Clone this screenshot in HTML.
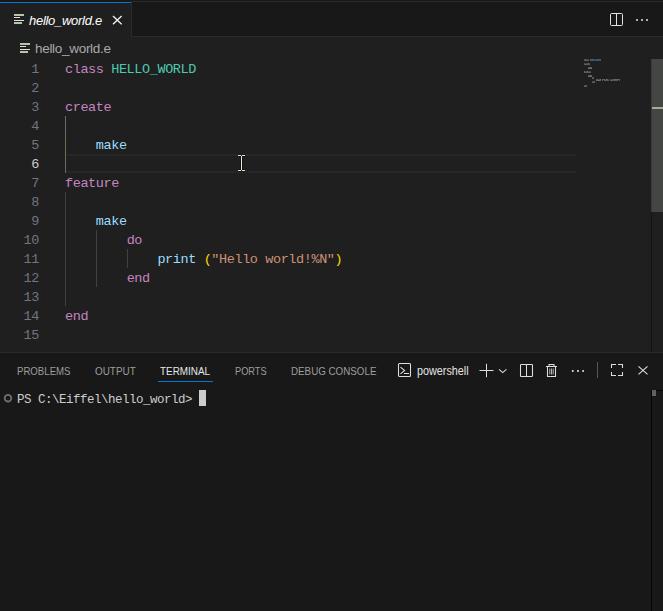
<!DOCTYPE html>
<html><head><meta charset="utf-8">
<style>
*{margin:0;padding:0;box-sizing:border-box}
html,body{width:663px;height:611px;overflow:hidden;background:#181818}
body{position:relative;font-family:"Liberation Sans",sans-serif}
.a{position:absolute}
.mono{font-family:"Liberation Mono",monospace}
/* tab bar */
#tabbar{left:0;top:0;width:663px;height:37px;background:#181818}
#tabtop{left:131px;top:1px;width:532px;height:1px;background:#2b2b2b}
#tabbot{left:131px;top:36px;width:532px;height:1px;background:#2b2b2b}
#tab{left:0;top:2px;width:131px;height:35px;background:#1f1f1f}
#tabblue{left:0;top:2px;width:131px;height:1px;background:#0078d4}
#tabright{left:131px;top:1px;width:1px;height:36px;background:#2b2b2b}
.tablabel{letter-spacing:-0.28px;left:29px;top:11.5px;font-size:13px;font-style:italic;color:#ffffff;white-space:pre;line-height:18px}
/* breadcrumbs */
#bc{left:0;top:37px;width:663px;height:22px;background:#1f1f1f}
.bclabel{letter-spacing:-0.3px;left:35px;top:39.5px;font-size:13.5px;color:#a9a9a9;white-space:pre;line-height:18px}
/* editor */
#editor{left:0;top:59px;width:663px;height:293px;background:#1f1f1f}
.ln{margin-top:1px;left:0;width:39px;text-align:right;color:#6e7681;font-size:13.5px;line-height:19px;height:19px;white-space:pre;letter-spacing:-0.4px}
.code{margin-top:1px;left:65px;font-size:13.5px;line-height:19px;height:19px;white-space:pre;letter-spacing:-0.4px;color:#cccccc}
.kw{color:#c586c0}.ty{color:#4ec9b0}.id{color:#9cdcfe}.br{color:#ffd700}.st{color:#ce9178}
.guide{width:1px;background:#404040}
/* panel */
#pborder{left:0;top:352px;width:663px;height:1px;background:#2b2b2b}
#panel{left:0;top:353px;width:663px;height:258px;background:#181818}
.pt{transform-origin:0 0;top:364px;font-size:11px;line-height:14px;color:#9d9d9d;white-space:pre}
.pw{font-size:12px;line-height:16px;color:#e4e4e4;white-space:pre}
.term{letter-spacing:-0.5px;font-size:12.5px;line-height:16px;color:#cccccc;white-space:pre}
</style></head>
<body>
<div id="tabbar" class="a"></div>
<div id="tabtop" class="a"></div>
<div id="tabbot" class="a"></div>
<div id="tab" class="a"></div>
<div id="tabblue" class="a"></div>
<div id="tabright" class="a"></div>
<!-- tab icon -->
<svg class="a" style="left:14px;top:14px" width="10" height="10" viewBox="0 0 10 10">
<rect x="0" y="0" width="10" height="2" fill="#b3c6ab"/>
<rect x="0" y="3" width="6" height="1" fill="#e0e0e0"/>
<rect x="0" y="6" width="10" height="1" fill="#e0e0e0"/>
<rect x="0" y="8" width="8" height="2" fill="#b3c6ab"/>
</svg>
<div class="a tablabel">hello_world.e</div>
<svg class="a" style="left:112px;top:15px" width="10" height="10" viewBox="0 0 10 10">
<path d="M1 0.9L9.6 9.3M9.6 0.9L1 9.3" stroke="#f2f2f2" stroke-width="1.35"/>
</svg>
<!-- split editor -->
<svg class="a" style="left:610px;top:13px" width="14" height="14" viewBox="0 0 14 14">
<rect x="0.5" y="0.5" width="12" height="12" rx="1" fill="none" stroke="#e2e2e2" stroke-width="1"/>
<line x1="6.5" y1="0.5" x2="6.5" y2="12.5" stroke="#e2e2e2" stroke-width="1"/>
</svg>
<svg class="a" style="left:635px;top:18px" width="15" height="4" viewBox="0 0 15 4">
<circle cx="2" cy="2" r="1" fill="#e2e2e2"/><circle cx="7" cy="2" r="1" fill="#e2e2e2"/><circle cx="12" cy="2" r="1" fill="#e2e2e2"/>
</svg>

<div id="bc" class="a"></div>
<svg class="a" style="left:20px;top:43px" width="10" height="10" viewBox="0 0 10 10">
<rect x="0" y="0" width="10" height="2" fill="#b4c6ac"/>
<rect x="0" y="3" width="6" height="1" fill="#e0e0e0"/>
<rect x="0" y="6" width="10" height="1" fill="#e0e0e0"/>
<rect x="0" y="8" width="8" height="2" fill="#b4c6ac"/>
</svg>
<div class="a bclabel">hello_world.e</div>

<div id="editor" class="a"></div>
<!-- current line -->
<div class="a" style="left:65px;top:154px;width:511px;height:19px;border-top:2px solid #262626;border-bottom:2px solid #262626"></div>
<!-- guides -->
<div class="a guide" style="left:65px;top:116px;height:57px;background:#676b6d"></div>
<div class="a guide" style="left:65px;top:135px;height:19px;background:#726d50"></div>
<div class="a guide" style="left:65px;top:192px;height:114px"></div>
<div class="a guide" style="left:96px;top:230px;height:57px"></div>
<div class="a guide" style="left:127px;top:249px;height:19px"></div>

<div class="a ln mono" style="top:59px">1</div>
<div class="a ln mono" style="top:78px">2</div>
<div class="a ln mono" style="top:97px">3</div>
<div class="a ln mono" style="top:116px">4</div>
<div class="a ln mono" style="top:135px">5</div>
<div class="a ln mono" style="top:154px;color:#cccccc">6</div>
<div class="a ln mono" style="top:173px">7</div>
<div class="a ln mono" style="top:192px">8</div>
<div class="a ln mono" style="top:211px">9</div>
<div class="a ln mono" style="top:230px">10</div>
<div class="a ln mono" style="top:249px">11</div>
<div class="a ln mono" style="top:268px">12</div>
<div class="a ln mono" style="top:287px">13</div>
<div class="a ln mono" style="top:306px">14</div>
<div class="a ln mono" style="top:325px">15</div>

<div class="a code mono" style="top:59px"><span class="kw">class</span> <span class="ty">HELLO_WORLD</span></div>
<div class="a code mono" style="top:97px"><span class="kw">create</span></div>
<div class="a code mono" style="top:135px">    <span class="id">make</span></div>
<div class="a code mono" style="top:173px"><span class="kw">feature</span></div>
<div class="a code mono" style="top:211px">    <span class="id">make</span></div>
<div class="a code mono" style="top:230px">        <span class="kw">do</span></div>
<div class="a code mono" style="top:249px">            <span class="id">print</span> <span class="br">(</span><span class="st">"Hello world!%N"</span><span class="br">)</span></div>
<div class="a code mono" style="top:268px">        <span class="kw">end</span></div>
<div class="a code mono" style="top:306px"><span class="kw">end</span></div>

<!-- I-beam -->
<svg class="a" style="left:236px;top:153px" width="11" height="20" viewBox="0 0 11 20">
<path d="M2 2.5H5M6 2.5H9M5.5 3V17M2 17.5H5M6 17.5H9" stroke="#000" stroke-width="2.4" opacity="0.55"/>
<path d="M2 2.5H5M6 2.5H9M5.5 3V17M2 17.5H5M6 17.5H9" stroke="#ece6d6" stroke-width="1"/>
</svg>

<!-- minimap -->
<svg class="a" style="left:0;top:0" width="663" height="100" viewBox="0 0 663 100" shape-rendering="crispEdges"><rect x="584" y="59" width="1" height="1" fill="#a0a0a0" fill-opacity="0.3"/><rect x="584" y="60" width="1" height="1" fill="#a0a0a0" fill-opacity="0.5"/><rect x="585" y="59" width="1" height="1" fill="#a0a0a0" fill-opacity="0.55"/><rect x="585" y="60" width="1" height="1" fill="#a0a0a0" fill-opacity="0.45"/><rect x="586" y="59" width="1" height="1" fill="#a0a0a0" fill-opacity="0.3"/><rect x="586" y="60" width="1" height="1" fill="#a0a0a0" fill-opacity="0.5"/><rect x="587" y="59" width="1" height="1" fill="#a0a0a0" fill-opacity="0.3"/><rect x="587" y="60" width="1" height="1" fill="#a0a0a0" fill-opacity="0.5"/><rect x="588" y="59" width="1" height="1" fill="#a0a0a0" fill-opacity="0.3"/><rect x="588" y="60" width="1" height="1" fill="#a0a0a0" fill-opacity="0.5"/><rect x="590" y="59" width="1" height="1" fill="#5a90c8" fill-opacity="0.55"/><rect x="590" y="60" width="1" height="1" fill="#5a90c8" fill-opacity="0.45"/><rect x="591" y="59" width="1" height="1" fill="#5a90c8" fill-opacity="0.55"/><rect x="591" y="60" width="1" height="1" fill="#5a90c8" fill-opacity="0.45"/><rect x="592" y="59" width="1" height="1" fill="#5a90c8" fill-opacity="0.55"/><rect x="592" y="60" width="1" height="1" fill="#5a90c8" fill-opacity="0.45"/><rect x="593" y="59" width="1" height="1" fill="#5a90c8" fill-opacity="0.55"/><rect x="593" y="60" width="1" height="1" fill="#5a90c8" fill-opacity="0.45"/><rect x="594" y="59" width="1" height="1" fill="#5a90c8" fill-opacity="0.55"/><rect x="594" y="60" width="1" height="1" fill="#5a90c8" fill-opacity="0.45"/><rect x="595" y="59" width="1" height="1" fill="#5a90c8" fill-opacity="0.1"/><rect x="595" y="60" width="1" height="1" fill="#5a90c8" fill-opacity="0.45"/><rect x="596" y="59" width="1" height="1" fill="#5a90c8" fill-opacity="0.55"/><rect x="596" y="60" width="1" height="1" fill="#5a90c8" fill-opacity="0.45"/><rect x="597" y="59" width="1" height="1" fill="#5a90c8" fill-opacity="0.55"/><rect x="597" y="60" width="1" height="1" fill="#5a90c8" fill-opacity="0.45"/><rect x="598" y="59" width="1" height="1" fill="#5a90c8" fill-opacity="0.55"/><rect x="598" y="60" width="1" height="1" fill="#5a90c8" fill-opacity="0.45"/><rect x="599" y="59" width="1" height="1" fill="#5a90c8" fill-opacity="0.55"/><rect x="599" y="60" width="1" height="1" fill="#5a90c8" fill-opacity="0.45"/><rect x="600" y="59" width="1" height="1" fill="#5a90c8" fill-opacity="0.55"/><rect x="600" y="60" width="1" height="1" fill="#5a90c8" fill-opacity="0.45"/><rect x="584" y="63" width="1" height="1" fill="#a0a0a0" fill-opacity="0.3"/><rect x="584" y="64" width="1" height="1" fill="#a0a0a0" fill-opacity="0.5"/><rect x="585" y="63" width="1" height="1" fill="#a0a0a0" fill-opacity="0.3"/><rect x="585" y="64" width="1" height="1" fill="#a0a0a0" fill-opacity="0.5"/><rect x="586" y="63" width="1" height="1" fill="#a0a0a0" fill-opacity="0.3"/><rect x="586" y="64" width="1" height="1" fill="#a0a0a0" fill-opacity="0.5"/><rect x="587" y="63" width="1" height="1" fill="#a0a0a0" fill-opacity="0.3"/><rect x="587" y="64" width="1" height="1" fill="#a0a0a0" fill-opacity="0.5"/><rect x="588" y="63" width="1" height="1" fill="#a0a0a0" fill-opacity="0.55"/><rect x="588" y="64" width="1" height="1" fill="#a0a0a0" fill-opacity="0.45"/><rect x="589" y="63" width="1" height="1" fill="#a0a0a0" fill-opacity="0.3"/><rect x="589" y="64" width="1" height="1" fill="#a0a0a0" fill-opacity="0.5"/><rect x="588" y="67" width="1" height="1" fill="#b0c4d4" fill-opacity="0.3"/><rect x="588" y="68" width="1" height="1" fill="#b0c4d4" fill-opacity="0.5"/><rect x="589" y="67" width="1" height="1" fill="#b0c4d4" fill-opacity="0.3"/><rect x="589" y="68" width="1" height="1" fill="#b0c4d4" fill-opacity="0.5"/><rect x="590" y="67" width="1" height="1" fill="#b0c4d4" fill-opacity="0.55"/><rect x="590" y="68" width="1" height="1" fill="#b0c4d4" fill-opacity="0.45"/><rect x="591" y="67" width="1" height="1" fill="#b0c4d4" fill-opacity="0.3"/><rect x="591" y="68" width="1" height="1" fill="#b0c4d4" fill-opacity="0.5"/><rect x="584" y="71" width="1" height="1" fill="#a0a0a0" fill-opacity="0.55"/><rect x="584" y="72" width="1" height="1" fill="#a0a0a0" fill-opacity="0.45"/><rect x="585" y="71" width="1" height="1" fill="#a0a0a0" fill-opacity="0.3"/><rect x="585" y="72" width="1" height="1" fill="#a0a0a0" fill-opacity="0.5"/><rect x="586" y="71" width="1" height="1" fill="#a0a0a0" fill-opacity="0.3"/><rect x="586" y="72" width="1" height="1" fill="#a0a0a0" fill-opacity="0.5"/><rect x="587" y="71" width="1" height="1" fill="#a0a0a0" fill-opacity="0.55"/><rect x="587" y="72" width="1" height="1" fill="#a0a0a0" fill-opacity="0.45"/><rect x="588" y="71" width="1" height="1" fill="#a0a0a0" fill-opacity="0.3"/><rect x="588" y="72" width="1" height="1" fill="#a0a0a0" fill-opacity="0.5"/><rect x="589" y="71" width="1" height="1" fill="#a0a0a0" fill-opacity="0.3"/><rect x="589" y="72" width="1" height="1" fill="#a0a0a0" fill-opacity="0.5"/><rect x="590" y="71" width="1" height="1" fill="#a0a0a0" fill-opacity="0.3"/><rect x="590" y="72" width="1" height="1" fill="#a0a0a0" fill-opacity="0.5"/><rect x="588" y="75" width="1" height="1" fill="#b0c4d4" fill-opacity="0.3"/><rect x="588" y="76" width="1" height="1" fill="#b0c4d4" fill-opacity="0.5"/><rect x="589" y="75" width="1" height="1" fill="#b0c4d4" fill-opacity="0.3"/><rect x="589" y="76" width="1" height="1" fill="#b0c4d4" fill-opacity="0.5"/><rect x="590" y="75" width="1" height="1" fill="#b0c4d4" fill-opacity="0.55"/><rect x="590" y="76" width="1" height="1" fill="#b0c4d4" fill-opacity="0.45"/><rect x="591" y="75" width="1" height="1" fill="#b0c4d4" fill-opacity="0.3"/><rect x="591" y="76" width="1" height="1" fill="#b0c4d4" fill-opacity="0.5"/><rect x="592" y="77" width="1" height="1" fill="#a0a0a0" fill-opacity="0.55"/><rect x="592" y="78" width="1" height="1" fill="#a0a0a0" fill-opacity="0.45"/><rect x="593" y="77" width="1" height="1" fill="#a0a0a0" fill-opacity="0.3"/><rect x="593" y="78" width="1" height="1" fill="#a0a0a0" fill-opacity="0.5"/><rect x="596" y="79" width="1" height="1" fill="#b0c4d4" fill-opacity="0.4"/><rect x="596" y="80" width="1" height="1" fill="#b0c4d4" fill-opacity="0.45"/><rect x="597" y="79" width="1" height="1" fill="#b0c4d4" fill-opacity="0.3"/><rect x="597" y="80" width="1" height="1" fill="#b0c4d4" fill-opacity="0.5"/><rect x="598" y="79" width="1" height="1" fill="#b0c4d4" fill-opacity="0.3"/><rect x="598" y="80" width="1" height="1" fill="#b0c4d4" fill-opacity="0.5"/><rect x="599" y="79" width="1" height="1" fill="#b0c4d4" fill-opacity="0.3"/><rect x="599" y="80" width="1" height="1" fill="#b0c4d4" fill-opacity="0.5"/><rect x="600" y="79" width="1" height="1" fill="#b0c4d4" fill-opacity="0.55"/><rect x="600" y="80" width="1" height="1" fill="#b0c4d4" fill-opacity="0.45"/><rect x="602" y="79" width="1" height="1" fill="#b8a448" fill-opacity="0.55"/><rect x="602" y="80" width="1" height="1" fill="#b8a448" fill-opacity="0.45"/><rect x="603" y="79" width="1" height="1" fill="#a89e88" fill-opacity="0.45"/><rect x="603" y="80" width="1" height="1" fill="#a89e88" fill-opacity="0.05"/><rect x="604" y="79" width="1" height="1" fill="#a89e88" fill-opacity="0.55"/><rect x="604" y="80" width="1" height="1" fill="#a89e88" fill-opacity="0.45"/><rect x="605" y="79" width="1" height="1" fill="#a89e88" fill-opacity="0.3"/><rect x="605" y="80" width="1" height="1" fill="#a89e88" fill-opacity="0.5"/><rect x="606" y="79" width="1" height="1" fill="#a89e88" fill-opacity="0.55"/><rect x="606" y="80" width="1" height="1" fill="#a89e88" fill-opacity="0.45"/><rect x="607" y="79" width="1" height="1" fill="#a89e88" fill-opacity="0.55"/><rect x="607" y="80" width="1" height="1" fill="#a89e88" fill-opacity="0.45"/><rect x="608" y="79" width="1" height="1" fill="#a89e88" fill-opacity="0.3"/><rect x="608" y="80" width="1" height="1" fill="#a89e88" fill-opacity="0.5"/><rect x="610" y="79" width="1" height="1" fill="#a89e88" fill-opacity="0.3"/><rect x="610" y="80" width="1" height="1" fill="#a89e88" fill-opacity="0.5"/><rect x="611" y="79" width="1" height="1" fill="#a89e88" fill-opacity="0.3"/><rect x="611" y="80" width="1" height="1" fill="#a89e88" fill-opacity="0.5"/><rect x="612" y="79" width="1" height="1" fill="#a89e88" fill-opacity="0.3"/><rect x="612" y="80" width="1" height="1" fill="#a89e88" fill-opacity="0.5"/><rect x="613" y="79" width="1" height="1" fill="#a89e88" fill-opacity="0.55"/><rect x="613" y="80" width="1" height="1" fill="#a89e88" fill-opacity="0.45"/><rect x="614" y="79" width="1" height="1" fill="#a89e88" fill-opacity="0.55"/><rect x="614" y="80" width="1" height="1" fill="#a89e88" fill-opacity="0.45"/><rect x="615" y="79" width="1" height="1" fill="#a89e88" fill-opacity="0.55"/><rect x="615" y="80" width="1" height="1" fill="#a89e88" fill-opacity="0.45"/><rect x="616" y="79" width="1" height="1" fill="#a89e88" fill-opacity="0.55"/><rect x="616" y="80" width="1" height="1" fill="#a89e88" fill-opacity="0.45"/><rect x="617" y="79" width="1" height="1" fill="#a89e88" fill-opacity="0.55"/><rect x="617" y="80" width="1" height="1" fill="#a89e88" fill-opacity="0.45"/><rect x="618" y="79" width="1" height="1" fill="#a89e88" fill-opacity="0.45"/><rect x="618" y="80" width="1" height="1" fill="#a89e88" fill-opacity="0.05"/><rect x="619" y="79" width="1" height="1" fill="#b8a448" fill-opacity="0.55"/><rect x="619" y="80" width="1" height="1" fill="#b8a448" fill-opacity="0.45"/><rect x="592" y="81" width="1" height="1" fill="#a0a0a0" fill-opacity="0.3"/><rect x="592" y="82" width="1" height="1" fill="#a0a0a0" fill-opacity="0.5"/><rect x="593" y="81" width="1" height="1" fill="#a0a0a0" fill-opacity="0.3"/><rect x="593" y="82" width="1" height="1" fill="#a0a0a0" fill-opacity="0.5"/><rect x="594" y="81" width="1" height="1" fill="#a0a0a0" fill-opacity="0.55"/><rect x="594" y="82" width="1" height="1" fill="#a0a0a0" fill-opacity="0.45"/><rect x="584" y="85" width="1" height="1" fill="#a0a0a0" fill-opacity="0.3"/><rect x="584" y="86" width="1" height="1" fill="#a0a0a0" fill-opacity="0.5"/><rect x="585" y="85" width="1" height="1" fill="#a0a0a0" fill-opacity="0.3"/><rect x="585" y="86" width="1" height="1" fill="#a0a0a0" fill-opacity="0.5"/><rect x="586" y="85" width="1" height="1" fill="#a0a0a0" fill-opacity="0.55"/><rect x="586" y="86" width="1" height="1" fill="#a0a0a0" fill-opacity="0.45"/></svg>
<!-- scrollbar -->
<div class="a" style="left:651px;top:59px;width:12px;height:153px;background:#434643;border-left:1px solid #3a3c3a"></div>
<div class="a" style="left:652px;top:107px;width:11px;height:2px;background:#a3ad96"></div>
<div class="a" style="left:651px;top:212px;width:1px;height:140px;background:#121212"></div>

<div id="pborder" class="a"></div>
<div id="panel" class="a"></div>
<div class="a pt" style="left:17px;transform:scaleX(0.875)">PROBLEMS</div>
<div class="a pt" style="left:95px;transform:scaleX(0.9)">OUTPUT</div>
<div class="a pt" style="left:160px;color:#e7e7e7;transform:scaleX(0.9)">TERMINAL</div>
<div class="a" style="left:158px;top:381px;width:55px;height:1px;background:#0078d4"></div>
<div class="a pt" style="left:235px;transform:scaleX(0.84)">PORTS</div>
<div class="a pt" style="left:291px;transform:scaleX(0.89)">DEBUG CONSOLE</div>


<!-- panel actions -->
<svg class="a" style="left:396px;top:362px" width="17" height="17" viewBox="0 0 17 17">
<rect x="2.5" y="1.5" width="12" height="13" rx="1" fill="none" stroke="#dedede" stroke-width="1.05"/>
<path d="M4.5 5.2L8.6 8.5L4.5 11.8" fill="none" stroke="#dedede" stroke-width="1.05"/>
<path d="M8 11.5H13" fill="none" stroke="#dedede" stroke-width="1.05"/>
</svg>
<div class="a pw" style="left:417px;top:363px;transform-origin:0 0;transform:scaleX(0.9)">powershell</div>
<svg class="a" style="left:479px;top:363px" width="15" height="15" viewBox="0 0 15 15">
<path d="M0.5 7.5H14.5M7.5 0.8V14.2" stroke="#dedede" stroke-width="1"/>
</svg>
<svg class="a" style="left:498px;top:368px" width="10" height="6" viewBox="0 0 10 6">
<path d="M1 1.4L4.7 4.6L8.4 1.4" fill="none" stroke="#dedede" stroke-width="1.05"/>
</svg>
<svg class="a" style="left:519px;top:363px" width="16" height="15" viewBox="0 0 16 15">
<rect x="1.5" y="1.5" width="12" height="12" rx="0.8" fill="none" stroke="#dedede" stroke-width="1.05"/>
<path d="M7.5 1.5V13.5" stroke="#dedede" stroke-width="1.05"/>
</svg>
<svg class="a" style="left:545px;top:363px" width="13" height="15" viewBox="0 0 13 15">
<path d="M4 3V1.5H9V3" fill="none" stroke="#dedede" stroke-width="1.05"/>
<path d="M1 3.5H12" stroke="#dedede" stroke-width="1.05"/>
<path d="M2.5 3.5V13.5H10.5V3.5" fill="none" stroke="#dedede" stroke-width="1.05"/>
<path d="M4.8 5.5V11.5M6.5 5.5V11.5M8.2 5.5V11.5" stroke="#dedede" stroke-width="0.8"/>
</svg>
<svg class="a" style="left:570px;top:369px" width="16" height="4" viewBox="0 0 16 4">
<circle cx="2.8" cy="2" r="1.05" fill="#dedede"/><circle cx="8" cy="2" r="1.05" fill="#dedede"/><circle cx="13.1" cy="2" r="1.05" fill="#dedede"/>
</svg>
<div class="a" style="left:597px;top:362px;width:1px;height:16px;background:#565656"></div>
<svg class="a" style="left:609px;top:363px" width="16" height="15" viewBox="0 0 16 15">
<path d="M2.5 5V1.5H7M9 1.5H13.5V5M13.5 9V12.5H9M7 12.5H2.5V9" fill="none" stroke="#dedede" stroke-width="1.05"/>
</svg>
<svg class="a" style="left:637px;top:365px" width="12" height="11" viewBox="0 0 12 11">
<path d="M1.5 1.3L10.5 9.3M10.5 1.3L1.5 9.3" stroke="#dedede" stroke-width="1.1"/>
</svg>
<!-- terminal scrollbar -->
<div class="a" style="left:651px;top:390px;width:1px;height:221px;background:#050505"></div>
<div class="a" style="left:656px;top:390px;width:7px;height:1px;background:#050505"></div>
<div class="a" style="left:652px;top:390px;width:4px;height:6px;background:#5f6259"></div>

<!-- terminal -->
<svg class="a" style="left:3px;top:393px" width="11" height="11" viewBox="0 0 11 11">
<circle cx="5" cy="5.2" r="3.3" fill="none" stroke="#707068" stroke-width="1.8"/>
</svg>
<div class="a term mono" style="left:17px;top:392px">PS C:\Eiffel\hello_world&gt; </div>
<div class="a" style="left:199px;top:390px;width:7px;height:16px;background:#cccccc"></div>
</body></html>
